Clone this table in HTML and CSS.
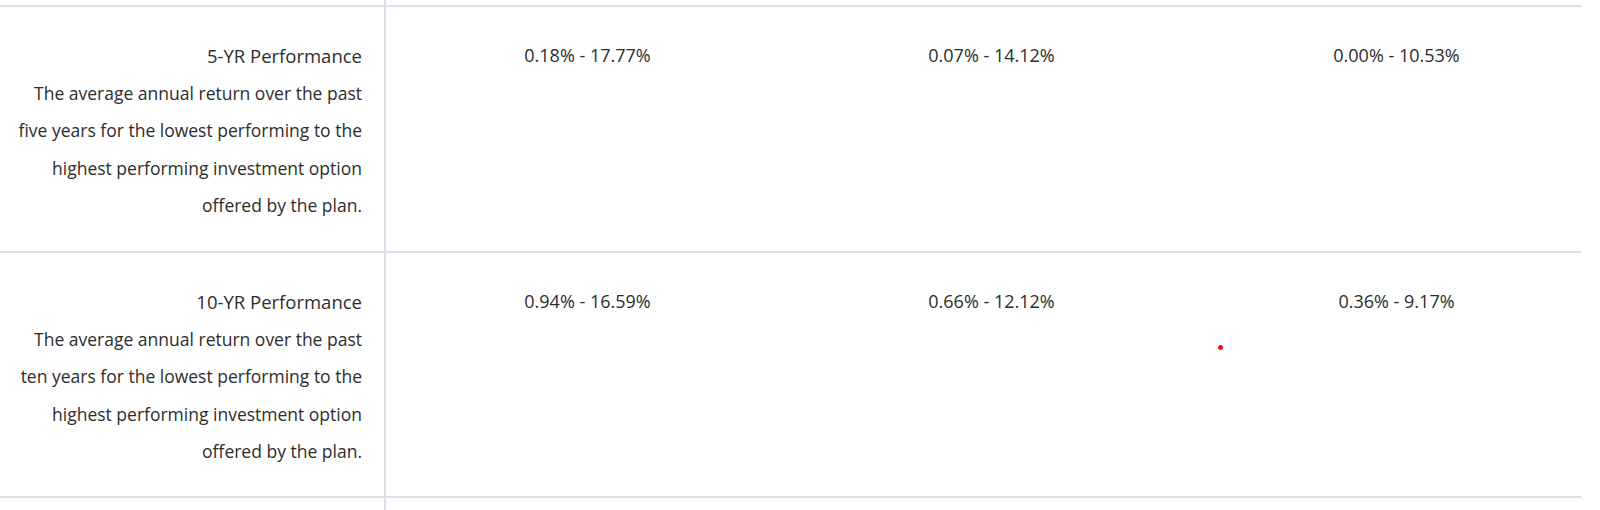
FILE: index.html
```html
<!DOCTYPE html>
<html lang="en">
<head>
<meta charset="utf-8">
<link rel="stylesheet" href="styles.css">
</head>
<body>
<div class="table">
  <div class="row stub">
    <div class="label"></div>
  </div>
  <div class="row">
    <div class="label">
      <div class="title">5-YR Performance</div>
      <div class="desc">The average annual return over the past<br>five years for the lowest performing to the<br>highest performing investment option<br>offered by the plan.</div>
    </div>
    <div class="val">0.18% - 17.77%</div>
    <div class="val">0.07% - 14.12%</div>
    <div class="val">0.00% - 10.53%</div>
  </div>
  <div class="row row-2">
    <div class="label">
      <div class="title">10-YR Performance</div>
      <div class="desc">The average annual return over the past<br>ten years for the lowest performing to the<br>highest performing investment option<br>offered by the plan.</div>
    </div>
    <div class="val">0.94% - 16.59%</div>
    <div class="val">0.66% - 12.12%</div>
    <div class="val val-dot">0.36% - 9.17%<span class="dot"></span></div>
  </div>
  <div class="row stub stub-end">
    <div class="label"></div>
  </div>
</div>
</body>
</html>
```
FILE: styles.css
```css
html, body {
  margin: 0;
  padding: 0;
  background: #fff;
}
body {
  width: 1600px;
  height: 510px;
  overflow: hidden;
  font-family: "Open Sans", "Liberation Sans", sans-serif;
  color: #2d2d2d;
}
.table {
  width: 1581px;
  display: flex;
  flex-direction: column;
  height: 510px;
}
.row {
  display: grid;
  grid-template-columns: 386px 403px 405px 405px;
  border-bottom: 2px solid #dcdeea;
  height: 244px;
  flex: none;
}
.row-2 {
  height: 243px;
}
.stub {
  height: 5px;
}
.stub-end {
  border-bottom: none;
  flex: 1;
  height: auto;
}
.label {
  border-right: 2px solid #dcdeea;
  text-align: right;
  padding: 30px 22px 0 0;
  line-height: 37.6px;
  white-space: nowrap;
}
.title {
  font-size: 18.5px;
}
.desc {
  font-size: 17.5px;
}
.val {
  text-align: center;
  padding-top: 30px;
  font-size: 18px;
  line-height: 37.6px;
  position: relative;
}
.dot {
  position: absolute;
  left: 24px;
  top: 92px;
  width: 5px;
  height: 5px;
  border-radius: 50%;
  background: #e8101a;
}
```
